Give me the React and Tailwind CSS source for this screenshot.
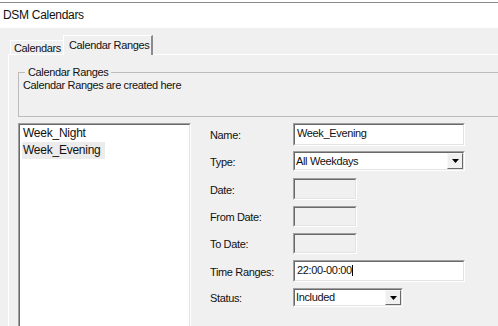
import React from 'react'

// sunken 3D edit box like the classic win32 controls
const Sunken = ({ className = '', inner = '', children }) => (
  <div className={`border border-t-[#a0a0a0] border-l-[#a0a0a0] border-r-white border-b-white ${className}`}>
    <div className={`flex h-full w-full border border-t-[#696969] border-l-[#696969] border-r-[#e3e3e3] border-b-[#e3e3e3] ${inner}`}>
      {children}
    </div>
  </div>
)

const DropButton = () => (
  <div className="ml-auto flex h-full w-[16px] items-center justify-center border border-t-[#f8f8f8] border-l-[#f8f8f8] border-r-[#696969] border-b-[#696969] bg-[#f0f0f0]">
    <svg width="7" height="4" viewBox="0 0 7 4">
      <path d="M0 0h7L3.5 4z" fill="#000" />
    </svg>
  </div>
)

const Row = ({ label, className, children }) => (
  <div className={`flex items-center ${className}`}>
    <div className="w-[83px] pt-[2px]">{label}</div>
    {children}
  </div>
)

const App = () => {
  return (
    <div className="h-[326px] w-[498px] overflow-hidden bg-[#f0f0f0] font-['Liberation_Sans',Arial,sans-serif] text-[11px] leading-[13px] tracking-[-0.35px] text-[#111]">
      {/* Title bar */}
      <div className="h-[2px] bg-white" />
      <div className="h-px bg-[#8a8a8a]" />
      <div className="flex h-[25px] items-center bg-white pl-[3px] text-[12px] tracking-[-0.3px]">DSM Calendars</div>

      {/* Tabs */}
      <div className="ml-[10px] mt-[7px] flex h-[19px] items-end">
        <div className="flex h-[14px] w-[53px] items-center border-t border-l border-white pl-[3px] pt-[1px]">Calendars</div>
        <div className="relative z-10 -mb-px flex h-[20px] w-[90px] items-center border-t border-l border-white border-r-2 border-r-[#8c8c8c] bg-[#f0f0f0] pl-[5px] pb-[1px]">
          Calendar Ranges
        </div>
      </div>

      {/* Tab page */}
      <div className="ml-[8px] h-[300px] w-[560px] border-t border-l border-white">
        <fieldset className="ml-[9px] mt-[11px] h-[51px] w-[500px] border border-[#bcbcbc]">
          <legend className="ml-[6px] px-[3px]">Calendar Ranges</legend>
          <div className="pl-[4px]">Calendar Ranges are created here</div>
        </fieldset>

        <div className="mt-[6px] flex">
          {/* List */}
          <Sunken className="ml-[9px] h-[220px] w-[173px]" inner="flex-col bg-white">
            <div className="ml-[2px] h-[17px] pl-[1px] text-[12px] leading-[17px] tracking-[-0.25px]">Week_Night</div>
            <div className="ml-[2px] h-[17px] text-[12px] leading-[17px] tracking-[-0.25px]">
              <span className="inline-block bg-[#ececec] pl-[1px] pr-[4px]">Week_Evening</span>
            </div>
          </Sunken>

          {/* Fields */}
          <div className="ml-[19px] flex flex-col">
            <Row label="Name:" className="h-[23px]">
              <Sunken className="h-full w-[172px]" inner="items-start bg-white pl-[2px] pt-[2px]">
                Week_Evening
              </Sunken>
            </Row>
            <Row label="Type:" className="mt-[5px] h-[20px]">
              <Sunken className="h-full w-[172px]" inner="items-center bg-white pl-[1px]">
                <span>All Weekdays</span>
                <DropButton />
              </Sunken>
            </Row>
            <Row label="Date:" className="mt-[7px] h-[22px]">
              <Sunken className="h-full w-[64px]" inner="bg-[#f0f0f0]" />
            </Row>
            <Row label="From Date:" className="mt-[6px] h-[21px]">
              <Sunken className="h-full w-[64px]" inner="bg-[#f0f0f0]" />
            </Row>
            <Row label="To Date:" className="mt-[6px] h-[21px]">
              <Sunken className="h-full w-[64px]" inner="bg-[#f0f0f0]" />
            </Row>
            <Row label="Time Ranges:" className="mt-[6px] h-[22px]">
              <Sunken className="h-full w-[172px]" inner="items-start bg-white pl-[2px] pt-[2px]">
                <span>22:00-00:00</span>
                <span className="mt-[1px] h-[11px] w-px bg-black" />
              </Sunken>
            </Row>
            <Row label="Status:" className="mt-[6px] h-[19px]">
              <Sunken className="h-full w-[110px]" inner="items-center bg-white pl-[1px]">
                <span>Included</span>
                <DropButton />
              </Sunken>
            </Row>
          </div>
        </div>
      </div>
    </div>
  )
}

export default App
